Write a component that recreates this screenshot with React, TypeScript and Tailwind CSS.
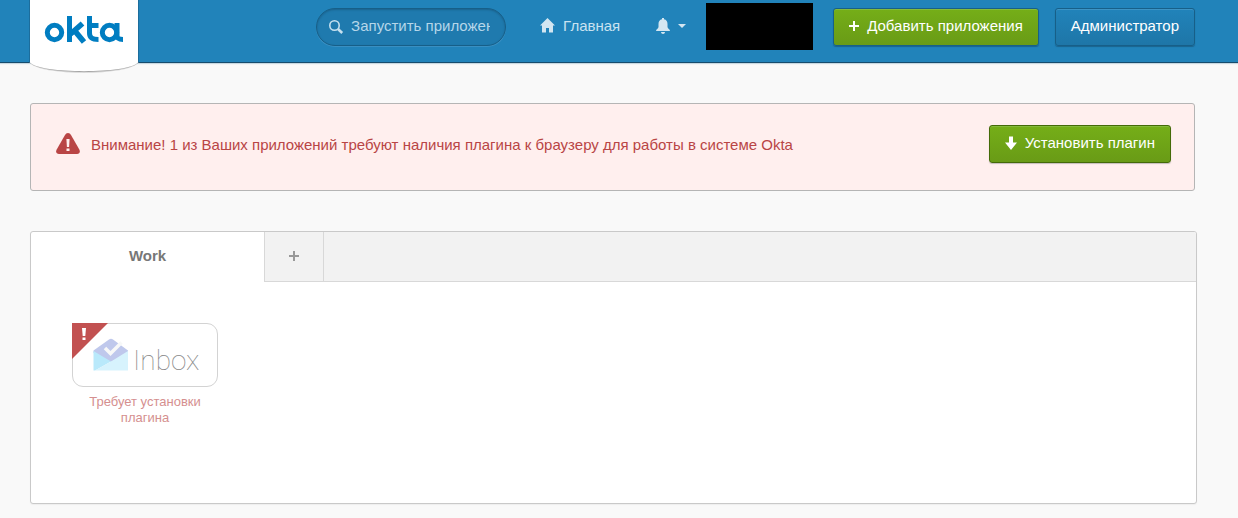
import React from "react";

const greenButton =
  "flex h-[38px] items-center gap-2 rounded-[3px] border bg-linear-to-b from-[#75ae18] to-[#699b16] px-[15px] pb-[2px] text-[15px] whitespace-nowrap text-white";

function OktaLogo() {
  return (
    <svg width="110" height="75" viewBox="29 0 110 75" role="img" aria-label="okta" className="block">
      <path d="M29 62C38 76.500 130 76.500 139 62" fill="#999" opacity="0.35" />
      <path d="M29.500 62C38 75.300 130 75.300 138.500 62" fill="#a5a5a5" />
      <path d="M29 0H139V62H29Z" fill="#1c6d9c" />
      <path d="M30 0H138V62.500C128 74 40 74 30 62.500Z" fill="#fff" />
      <g fill="none" stroke="#007dc1" strokeWidth="5">
        <circle cx="54.500" cy="32.500" r="7.200" />
        <path d="M69.500 16V42" />
        <path d="M70.500 34L82.500 23.500M74.500 30.500L84 42" strokeWidth="5.600" />
        <path d="M89.500 16V33C89.500 37.500 92 39.500 98.500 39.500M89.500 25.400H98.500" />
        <circle cx="109.500" cy="32.500" r="7.200" />
        <path d="M117 23V35.500C117 38.500 119 39.500 123 39.500" />
      </g>
    </svg>
  );
}

function Plus() {
  return (
    <svg width="10" height="10" viewBox="0 0 10 10" fill="currentColor" aria-hidden="true">
      <path d="M4 0h2v4h4v2H6v4H4V6H0V4h4z" />
    </svg>
  );
}

function Header() {
  return (
    <header className="relative flex h-[63px] items-start justify-end border-b border-[#174c6d] bg-[#2183ba] pr-[43px] shadow-[0_1px_1px_#c8d8e0]">
      <a href="#home" className="absolute top-0 left-[29px]">
        <OktaLogo />
      </a>
      <label className="mt-2 flex h-[38px] w-[190px] items-center rounded-full border border-[#175f88] bg-[#1f7aae] pr-[15px] pl-3 shadow-[inset_0_1px_2px_#1a628d,0_1px_0_#398fc2]">
        <svg width="15" height="15" viewBox="0 0 15 15" fill="none" stroke="#c5e0ef" aria-hidden="true" className="shrink-0">
          <circle cx="5.500" cy="5.500" r="4.700" strokeWidth="1.600" />
          <path d="M9 9L13.200 13" strokeWidth="2.600" />
        </svg>
        <input
          type="text"
          aria-label="Запустить приложение"
          placeholder="Запустить приложение"
          className="ml-[7px] h-5 w-full min-w-0 bg-transparent pb-[2px] text-[15px] text-white outline-none placeholder:text-[#b5d6e9] placeholder:opacity-100"
        />
      </label>
      <nav className="mt-2 flex h-9 items-center text-[15px] text-[#c9e2f0]">
        <a href="#main" className="ml-[34px] flex items-center gap-2">
          <svg width="15" height="15" viewBox="0 0 15 15" fill="#d3e6f1" aria-hidden="true" className="mb-[2px]">
            <path d="M7.500 0L15 7.500H13V14.500H9V10H6V14.500H2V7.500H0Z" />
          </svg>
          <span>Главная</span>
        </a>
        <button type="button" aria-label="Уведомления" className="ml-9 flex items-center gap-2">
          <svg width="14" height="16" viewBox="0 0 14 16" fill="#d3e6f1" aria-hidden="true">
            <path d="M6 0H8V1.200C10.500 1.700 11.500 3.500 11.500 6V9C11.500 10.500 14 11.300 14 13H0C0 11.300 2.500 10.500 2.500 9V6C2.500 3.500 3.500 1.700 6 1.200ZM5 14H9C9 16.500 5 16.500 5 14Z" />
          </svg>
          <svg width="8" height="4" viewBox="0 0 8 4" fill="#d3e6f1" aria-hidden="true">
            <path d="M0 0H8L4 4Z" />
          </svg>
        </button>
      </nav>
      <div className="mt-[3px] ml-5 h-[47px] w-[107px] bg-black" />
      <button type="button" className={`${greenButton} mt-2 ml-5 border-[#176088] shadow-[0_1px_1px_#1a638e,inset_0_1px_0_#84b93a]`}>
        <Plus />
        Добавить приложения
      </button>
      <button
        type="button"
        className="mt-2 ml-4 h-[38px] rounded-[3px] border border-[#175f88] bg-linear-to-b from-[#2183ba] to-[#1e76a8] px-[15px] pb-[2px] text-[15px] text-white shadow-[0_1px_1px_#1a638e,inset_0_1px_0_#3d94c5]"
      >
        Администратор
      </button>
    </header>
  );
}

function Alert() {
  return (
    <section className="mt-10 mr-[43px] ml-[30px] flex h-[88px] items-start rounded-[3px] border border-[#b5b5b5] bg-[#ffefee] pr-[23px] pl-[25px]">
      <svg width="24" height="21" viewBox="0 0 24 21" aria-hidden="true" className="mt-[29px] shrink-0">
        <path d="M12 0C13.400 0 14.200 .8 15 2L23.300 16.500C24.600 19 23.500 21 21 21H3C.5 21 -.6 19 .7 16.500L9 2C9.800 .8 10.600 0 12 0Z" fill="#b94545" />
        <path d="M10.400 6H13.600L13.100 14H10.900ZM10.500 15.500H13.500V18H10.500Z" fill="#ffefee" />
      </svg>
      <p className="mt-8 ml-[11px] text-[15px] leading-[18px] text-[#b94545]">
        Внимание! 1 из Ваших приложений требуют наличия плагина к браузеру для работы в системе Okta
      </p>
      <button type="button" className={`${greenButton} mt-[21px] ml-auto border-[#446a08] shadow-[0_1px_1px_#c5bcbb,inset_0_1px_0_#84b93a]`}>
        <svg width="12" height="14" viewBox="0 0 12 14" fill="currentColor" aria-hidden="true">
          <path d="M4 .5H8V6.500H12L6 14L0 6.500H4Z" />
        </svg>
        Установить плагин
      </button>
    </section>
  );
}

function InboxApp() {
  return (
    <a href="#inbox" className="block w-[146px]">
      <div className="relative flex h-16 items-start rounded-[11px] border border-[#d3d3d3] bg-white pl-5">
        <svg width="36" height="34" viewBox="0 0 36 34" aria-hidden="true" className="mt-[14px]">
          <path d="M.5 12.500L16 1.500Q18 0 20 1.500L35 12.500V15L18 24L.5 15Z" fill="#bfc8ec" />
          <path d="M.5 13L18 23.500L2 32.500H.5Z" fill="#b9e9fb" />
          <path d="M35 13V32.500H2L18 23.500Z" fill="#d7f3fd" />
          <path d="M12 10L17.500 15.500L28.500 4.500" fill="none" stroke="#f7f8f8" strokeWidth="3.500" />
        </svg>
        <span className="mt-[18px] ml-1 font-['Roboto'] text-[28px] leading-[38px] font-thin text-[#888]">Inbox</span>
        <svg width="36" height="36" viewBox="0 0 36 36" aria-hidden="true" className="absolute -top-px -left-px">
          <path d="M0 0H36L0 36Z" fill="#c25151" />
          <path d="M10 5H14L13.300 13H10.700ZM10.500 14.500H13.500V17H10.500Z" fill="#fff" />
        </svg>
      </div>
      <p className="mt-[7px] px-2 text-center text-[13px] leading-4 text-[#d58f8f]">Требует установки плагина</p>
    </a>
  );
}

export default function App() {
  return (
    <div className="min-h-screen bg-[#f9f9f9] pb-[14px] font-['Liberation_Sans',Arial,sans-serif]">
      <Header />
      <main>
        <Alert />
        <section className="mt-10 mr-[41px] ml-[30px] min-h-[273px] rounded-[3px] border border-[#c9c9c9] bg-white shadow-[0_1px_1px_#eeeeee]">
          <div className="flex h-[50px]">
            <button type="button" className="w-[233px] pb-px text-[15px] font-bold text-[#777]">
              Work
            </button>
            <button
              type="button"
              aria-label="Добавить вкладку"
              className="flex w-[60px] items-center justify-center border-x border-b border-[#d8d8d8] bg-[#f2f2f2] pb-px text-[#999]"
            >
              <Plus />
            </button>
            <div className="grow rounded-tr-[2px] border-b border-[#d8d8d8] bg-[#f2f2f2]" />
          </div>
          <div className="px-[41px] pt-[41px]">
            <InboxApp />
          </div>
        </section>
      </main>
    </div>
  );
}
